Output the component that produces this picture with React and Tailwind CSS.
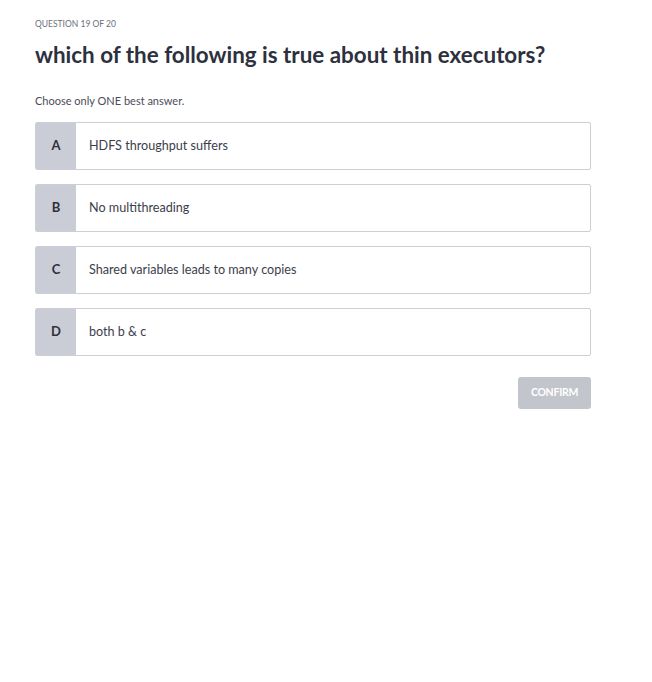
import React from 'react';

const options = [
  { key: 'A', text: 'HDFS throughput suffers' },
  { key: 'B', text: 'No multithreading' },
  { key: 'C', text: 'Shared variables leads to many copies' },
  { key: 'D', text: 'both b & c' },
];

const App = () => {
  return (
    <div className="min-h-[682px] bg-white px-[35px] pt-[18px] text-[#3b3e4a]" style={{ fontFamily: 'Lato, "Liberation Sans", sans-serif' }}>
      <div className="w-[556px]">
        <p className="text-[8.5px] leading-[12px] text-[#6b6e7a]">QUESTION 19 OF 20</p>
        <h1 className="mt-[10px] text-[22.4px] leading-[30px] font-bold text-[#2d303d]">which of the following is true about thin executors?</h1>
        <p className="mt-[23px] text-[11px] leading-[16px] text-[#4a4d58]">Choose only ONE best answer.</p>

        <div className="mt-[13px] flex flex-col gap-[14px]">
          {options.map(opt => (
            <div key={opt.key} className="flex h-[48px] border border-[#cdcfd6] rounded-[2px] overflow-hidden">
              <div className="w-[40px] flex items-center justify-center bg-[#cbcdd6] text-[13px] font-bold text-[#2d303d]">
                {opt.key}
              </div>
              <div className="flex-1 flex items-center pl-[13px] text-[12.6px] text-[#3b3e4a]">
                {opt.text}
              </div>
            </div>
          ))}
        </div>

        <div className="mt-[21px] flex justify-end">
          <button className="w-[73px] h-[32px] rounded-[3px] bg-[#c3c5cc] text-white text-[10.5px] font-bold tracking-tight">
            CONFIRM
          </button>
        </div>
      </div>
    </div>
  );
};

export default App;
